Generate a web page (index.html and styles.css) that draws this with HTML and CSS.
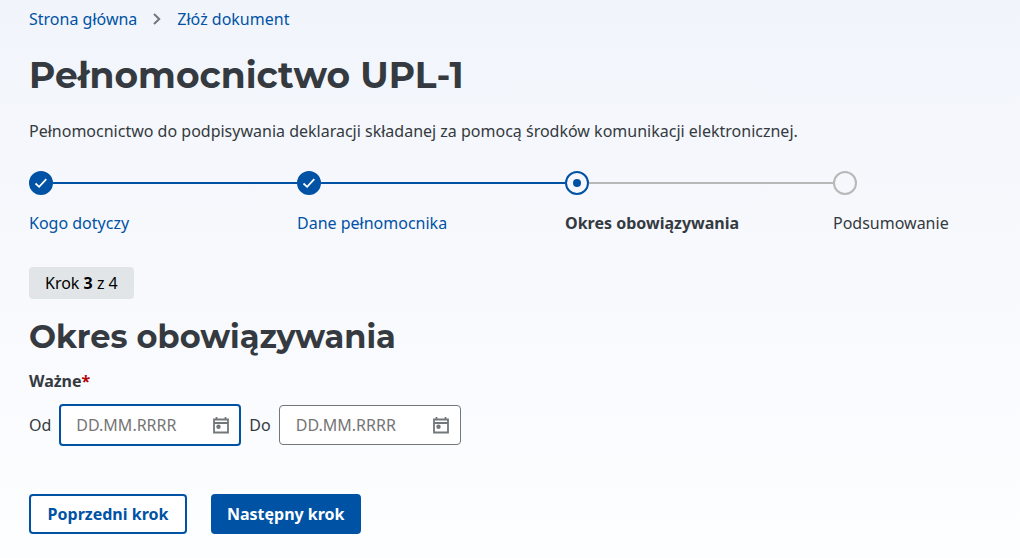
FILE: index.html
```
<!DOCTYPE html>
<html lang="pl">
<head>
  <meta charset="UTF-8">
  <meta name="viewport" content="width=device-width, initial-scale=1">
  <title>Pełnomocnictwo UPL-1</title>
  <link rel="stylesheet" href="styles.css">
</head>
<body>

<main class="page">
  <nav class="breadcrumbs" aria-label="Okruszki">
    <a href="#">Strona główna</a>
    <svg width="8" height="12" viewBox="0 0 8 12" aria-hidden="true">
      <path d="M1 1l5.2 5L1 11" fill="none" stroke="#72777a" stroke-width="2"/>
    </svg>
    <a href="#">Złóż dokument</a>
  </nav>

  <h1>Pełnomocnictwo UPL-1</h1>
  <p class="lead">Pełnomocnictwo do podpisywania deklaracji składanej za pomocą środków komunikacji elektronicznej.</p>

  <ol class="steps">
    <li class="step done">
      <div class="track">
        <span class="dot">
          <svg width="14" height="14" viewBox="0 0 14 14" aria-hidden="true">
            <path d="M1.5 7.5l3.6 3.3L12.3 3.2" fill="none" stroke="#fff" stroke-width="1.8"/>
          </svg>
        </span>
      </div>
      <a href="#">Kogo dotyczy</a>
    </li>
    <li class="step done">
      <div class="track">
        <span class="dot">
          <svg width="14" height="14" viewBox="0 0 14 14" aria-hidden="true">
            <path d="M1.5 7.5l3.6 3.3L12.3 3.2" fill="none" stroke="#fff" stroke-width="1.8"/>
          </svg>
        </span>
      </div>
      <a href="#">Dane pełnomocnika</a>
    </li>
    <li class="step current" aria-current="step">
      <div class="track"><span class="dot"></span></div>
      <span>Okres obowiązywania</span>
    </li>
    <li class="step">
      <div class="track"><span class="dot"></span></div>
      <span>Podsumowanie</span>
    </li>
  </ol>

  <p class="counter">Krok <b>3</b> z 4</p>

  <h2>Okres obowiązywania</h2>

  <form>
    <fieldset>
      <legend>Ważne<span class="required">*</span></legend>
      <div class="dates">
        <label for="dateFrom">Od</label>
        <div class="date-field active">
          <input type="text" id="dateFrom" placeholder="DD.MM.RRRR">
          <button type="button" class="calendar" aria-label="Wybierz datę od">
            <svg width="16" height="18" viewBox="0 0 16 18" aria-hidden="true">
              <path d="M1 3.5h14v13H1zM1 7h14M3.5 1v2.5M12.5 1v2.5" fill="none" stroke="#72777a" stroke-width="1.8"/>
              <circle cx="5.5" cy="10.8" r="2.2" fill="#72777a"/>
            </svg>
          </button>
        </div>
        <label for="dateTo">Do</label>
        <div class="date-field">
          <input type="text" id="dateTo" placeholder="DD.MM.RRRR">
          <button type="button" class="calendar" aria-label="Wybierz datę do">
            <svg width="16" height="18" viewBox="0 0 16 18" aria-hidden="true">
              <path d="M1 3.5h14v13H1zM1 7h14M3.5 1v2.5M12.5 1v2.5" fill="none" stroke="#72777a" stroke-width="1.8"/>
              <circle cx="5.5" cy="10.8" r="2.2" fill="#72777a"/>
            </svg>
          </button>
        </div>
      </div>
    </fieldset>

    <div class="actions">
      <button type="button" class="btn secondary">Poprzedni krok</button>
      <button type="submit" class="btn primary">Następny krok</button>
    </div>
  </form>
</main>

</body>
</html>
```
FILE: styles.css
```
* {
  box-sizing: border-box;
}

body {
  margin: 0;
  min-height: 100vh;
  font-family: "Noto Sans", "Open Sans", sans-serif;
  font-size: 16px;
  line-height: 24px;
  color: #343a40;
  background: linear-gradient(#f1f5fb, #f8f9fd 50%, #fdfeff);
}

a {
  color: #0052a5;
  text-decoration: none;
}

a:hover {
  text-decoration: underline;
}

.page {
  padding: 7px 29px 24px;
}

.breadcrumbs {
  display: flex;
  align-items: center;
  gap: 16px;
}

h1, h2 {
  font-family: Montserrat, Inter, sans-serif;
  font-weight: 700;
}

h1 {
  margin: 20px 0;
  font-size: 36px;
  line-height: 48px;
}

.lead {
  margin: 0;
}

.steps {
  display: grid;
  grid-template-columns: repeat(3, 1fr) 158px;
  margin: 28px 0 32px;
  padding: 0;
  list-style: none;
}

.track {
  display: flex;
  align-items: center;
  margin-bottom: 16px;
}

.track::after {
  content: "";
  flex: 1;
  height: 2px;
  background: #b8b8b8;
}

.step:last-child .track::after {
  display: none;
}

.dot {
  display: flex;
  align-items: center;
  justify-content: center;
  width: 24px;
  height: 24px;
  border: 2px solid #b8b8b8;
  border-radius: 50%;
}

.done .track::after {
  background: #0052a5;
}

.done .dot {
  border-color: #0052a5;
  background: #0052a5;
}

.current {
  font-weight: 700;
}

.current .dot {
  border-color: #0052a5;
}

.current .dot::before {
  content: "";
  width: 8px;
  height: 8px;
  border-radius: 50%;
  background: #0052a5;
}

.counter {
  width: fit-content;
  margin: 0;
  padding: 4px 16px;
  border-radius: 4px;
  background: #e2e5e7;
  color: #000;
}

h2 {
  margin: 16px 0 10px;
  font-size: 32px;
  line-height: 44px;
}

fieldset {
  margin: 0;
  padding: 0;
  border: none;
}

legend {
  padding: 0;
  font-weight: 700;
}

.required {
  color: #b50000;
}

.dates {
  display: flex;
  align-items: center;
  gap: 8px;
  margin-top: 11px;
}

.date-field {
  display: flex;
  align-items: center;
  width: 182px;
  height: 40px;
  padding: 0 11px 0 16px;
  border: 1px solid #72777a;
  border-radius: 4px;
  background: #fff;
}

.date-field.active {
  height: 42px;
  padding: 0 10px 0 15px;
  border: 2px solid #0052a5;
}

.date-field input {
  flex: 1;
  min-width: 0;
  padding: 0;
  border: none;
  outline: none;
  background: none;
  font: inherit;
  color: inherit;
}

.date-field input::placeholder {
  color: #757575;
}

.calendar {
  display: flex;
  padding: 0;
  border: none;
  background: none;
  cursor: pointer;
}

.actions {
  display: flex;
  gap: 24px;
  margin-top: 48px;
}

.btn {
  height: 40px;
  padding: 0 14px;
  border: 2px solid #0052a5;
  border-radius: 4px;
  background: #fff;
  font: inherit;
  font-weight: 700;
  color: #0052a5;
  cursor: pointer;
}

.btn.secondary {
  min-width: 158px;
}

.btn.primary {
  background: #0052a5;
  color: #fff;
}
```
